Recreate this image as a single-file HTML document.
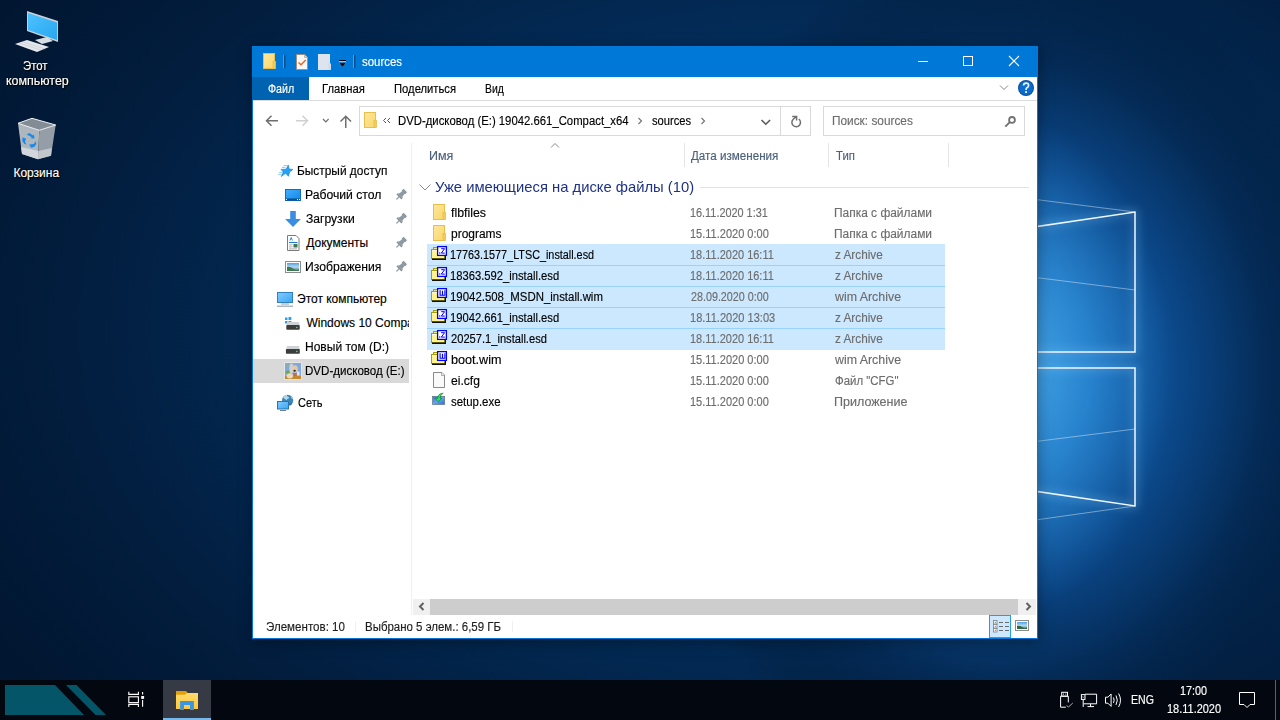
<!DOCTYPE html>
<html><head><meta charset="utf-8"><style>
*{margin:0;padding:0;box-sizing:border-box}
html,body{width:1280px;height:720px;overflow:hidden}
body{position:relative;font-family:'Liberation Sans',sans-serif;background:#021631}
.a{position:absolute}
.t{position:absolute;white-space:nowrap;line-height:20px;transform-origin:0 0;font-family:"Liberation Sans",sans-serif;-webkit-text-stroke:0.15px currentColor}
#wall{position:absolute;left:0;top:0;width:1280px;height:680px}
#win{position:absolute;left:252px;top:46px;width:786px;height:593px;background:#fff;border:1px solid #0078d7;box-shadow:1px 3px 14px rgba(0,0,0,0.35)}
#title{position:absolute;left:-1px;top:-1px;width:786px;height:31px;background:#0078d7}
#ribbon{position:absolute;left:0;top:30px;width:784px;height:24px;background:#fff;border-bottom:1px solid #dadbdc}
#filetab{position:absolute;left:0;top:0;width:56px;height:23px;background:#0063b1}
.box{position:absolute;border:1px solid #d9d9d9;background:#fff}
#taskbar{position:absolute;left:0;top:680px;width:1280px;height:40px;background:#03070f}

</style></head><body>
<svg id="wall" width="1280" height="680" viewBox="0 0 1280 680">
 <defs>
  <radialGradient id="g0" cx="0" cy="0" r="1" gradientUnits="userSpaceOnUse" gradientTransform="translate(800,330) scale(950,620)">
   <stop offset="0" stop-color="#063a72"/>
   <stop offset="0.45" stop-color="#032d5a"/>
   <stop offset="0.8" stop-color="#021c3c"/>
   <stop offset="1" stop-color="#011630"/>
  </radialGradient>
  <radialGradient id="g1" cx="0" cy="0" r="1" gradientUnits="userSpaceOnUse" gradientTransform="translate(1000,370) scale(360,420)">
   <stop offset="0" stop-color="#2c8cd8"/>
   <stop offset="0.25" stop-color="#1a6fbd"/>
   <stop offset="0.5" stop-color="#0b4788"/>
   <stop offset="0.75" stop-color="#042a55"/>
   <stop offset="1" stop-color="#021a38" stop-opacity="0"/>
  </radialGradient>
  <radialGradient id="g2" cx="0" cy="0" r="1" gradientUnits="userSpaceOnUse" gradientTransform="translate(1005,365) scale(165,250)">
   <stop offset="0" stop-color="#55b8f4" stop-opacity="0.8"/>
   <stop offset="0.5" stop-color="#3a9ce2" stop-opacity="0.45"/>
   <stop offset="1" stop-color="#2a86d4" stop-opacity="0"/>
  </radialGradient>
  <filter id="blur4" x="-20%" y="-20%" width="140%" height="140%"><feGaussianBlur stdDeviation="5"/></filter>
 </defs>
 <rect width="1280" height="680" fill="url(#g0)"/>
 <rect width="1280" height="680" fill="url(#g1)"/>
 <rect x="0" y="0" width="1280" height="680" fill="url(#g2)"/>
 <g stroke="#8fd0ff" fill="none" opacity="0.35" filter="url(#blur4)" stroke-width="5">
  <polyline points="1000,232 1135,212 1135,352 1000,352"/>
  <polyline points="1000,368 1135,368 1135,506 1000,486"/>
 </g>
 <g stroke="#eef8ff" fill="none">
  <polyline points="1000,232 1135,212 1135,352 1000,352" stroke-width="1.5"/>
  <polyline points="1000,368 1135,368 1135,506 1000,486" stroke-width="1.5"/>
  <line x1="1000" y1="195" x2="1135" y2="212" stroke-width="0.8" opacity="0.55"/>
  <line x1="1000" y1="273" x2="1135" y2="290" stroke-width="0.8" opacity="0.55"/>
  <line x1="1000" y1="446" x2="1135" y2="429" stroke-width="0.8" opacity="0.55"/>
  <line x1="1000" y1="525" x2="1135" y2="506" stroke-width="0.8" opacity="0.55"/>
 </g>
</svg>

<!-- desktop icons -->
<svg class="a" style="left:0;top:0" width="80" height="180" viewBox="0 0 80 180">
 <defs>
  <linearGradient id="scr" x1="0" y1="0" x2="1" y2="1">
   <stop offset="0" stop-color="#4cc2ff"/><stop offset="1" stop-color="#2aa6f0"/>
  </linearGradient>
  <linearGradient id="bin" x1="0" y1="0" x2="0" y2="1">
   <stop offset="0" stop-color="#a9b3bd"/><stop offset="0.8" stop-color="#c9d0d6"/><stop offset="1" stop-color="#e8ebee"/>
  </linearGradient>
 </defs>
 <!-- monitor -->
 <polygon points="27,11 58,21 58,42 27,31" fill="#c8d0d8"/>
 <polygon points="28,13 57,22.5 57,40 28,30" fill="url(#scr)"/>
 <polygon points="35,40 47,37 53,41 42,44" fill="#d7dde2"/>
 <polygon points="15,44 27,40 49,47 37,52" fill="#e4e8ec"/>
 <g stroke="#b9c0c7" stroke-width="0.5"><line x1="19" y1="43" x2="41" y2="50"/><line x1="23" y1="42" x2="45" y2="49"/></g>
 <!-- recycle bin -->
 <polygon points="18,123.3 39.3,130.3 38,159.3 22,154" fill="#aeb6be"/>
 <polygon points="39.3,130.3 55.7,125 51,155.7 38,159.3" fill="#959ea7"/>
 <polygon points="21,147 38.5,151 38,159.3 22,154" fill="#d3d7db"/>
 <polygon points="38.5,151 51.8,148 51,155.7 38,159.3" fill="#c2c7cc"/>
 <polygon points="18,123.3 32,118.3 55.7,125 39.3,130.3" fill="#838c95" stroke="#eef1f3" stroke-width="1" stroke-linejoin="round"/>
 <g fill="#1a8ae8">
  <path d="M26.5,134.5 l3,-1.5 l3.5,2.5 l1,-1 l0.5,4 l-3.8,-0.3 l1,-1 l-2.5,-1.5 z"/>
  <path d="M22.5,137.5 l3.5,1 l-1,3.5 l1.5,2.5 l-2,-0.5 l-2.2,-3 z"/>
  <path d="M29.5,144.5 l4.5,-0.5 l1.5,-3 l0.8,3 l-2,3 h-2 v1.5 l-2.5,-2.5 z"/>
 </g>
</svg>

<div id="win"></div>
<div class="a" style="left:252px;top:46px;width:786px;height:31px;background:#0078d7"></div>
<div class="a" style="left:252px;top:77px;width:57px;height:23px;background:#0063b1"></div>
<div class="a" style="left:253px;top:100px;width:784px;height:1px;background:#dadbdc"></div>

<!-- title icons -->
<svg class="a" style="left:252px;top:46px" width="786" height="31" viewBox="252 46 786 31">
 <defs>
  <linearGradient id="fold" x1="0" y1="0" x2="1" y2="1">
   <stop offset="0" stop-color="#ffe89a"/><stop offset="1" stop-color="#f9d66c"/>
  </linearGradient>
 </defs>
 <rect x="263.5" y="53.5" width="11" height="15" fill="url(#fold)" stroke="#e9be4c"/>
 <rect x="273" y="61.5" width="2.5" height="7" fill="#f5cc58" stroke="#e9be4c" stroke-width="0.8"/>
 <rect x="284" y="55" width="1.5" height="13" fill="#0b4f8f"/>
 <rect x="283.2" y="55" width="0.8" height="13" fill="#5aa7e8"/>
 <path d="M296.5,54.5 h8 l3,3 v12 h-11 z" fill="#f7f7f7" stroke="#a0907e"/>
 <path d="M304.5,54.5 v3 h3" fill="#d8d8d8" stroke="#b0a49a" stroke-width="0.8"/>
 <path d="M298.5,62.5 l2.5,2.3 l4.8,-4.8" stroke="#f0601c" stroke-width="1.3" fill="none"/>
 <rect x="318" y="54" width="12" height="16" fill="#dde4ef"/>
 <rect x="328.5" y="63.5" width="2.5" height="6.5" fill="#d2dae8"/>
 <rect x="339" y="60" width="7" height="1.1" fill="#000"/>
 <rect x="339" y="61.1" width="7" height="1.1" fill="#9fd0ff"/>
 <path d="M338.8,62.8 h7.4 l-3.7,4.2 z" fill="#000" stroke="#6ab4f5" stroke-width="0.4"/>
 <rect x="354" y="55" width="1.5" height="13" fill="#0b4f8f"/>
 <rect x="353.2" y="55" width="0.8" height="13" fill="#5aa7e8"/>
 <!-- window controls -->
 <rect x="918" y="61" width="10" height="1" fill="#fff"/>
 <rect x="963.5" y="56.5" width="9" height="9" fill="none" stroke="#fff"/>
 <path d="M1009,56 L1019,66 M1019,56 L1009,66" stroke="#fff" stroke-width="1.1"/>
</svg>

<!-- ribbon right -->
<svg class="a" style="left:990px;top:77px" width="47" height="23" viewBox="990 77 47 23">
 <path d="M1000,85.5 l4,4 l4,-4" stroke="#888" fill="none" stroke-width="1"/>
 <circle cx="1026" cy="88" r="8" fill="#0a4f98"/>
 <circle cx="1026" cy="88" r="7" fill="#0b6ccd"/>
 <path d="M1023.6,85.6 q0,-2.4 2.5,-2.4 q2.5,0 2.5,2.3 q0,1.4 -1.4,2.1 q-1.1,0.6 -1.1,1.9 v0.6" stroke="#e8f2fb" stroke-width="1.7" fill="none"/>
 <rect x="1025.1" y="91.1" width="1.9" height="1.9" fill="#e8f2fb"/>
</svg>

<!-- address toolbar -->
<svg class="a" style="left:253px;top:101px" width="784" height="42" viewBox="253 101 784 42">
 <g stroke="#6e6e6e" stroke-width="1.5" fill="none">
  <path d="M266.5,120.75 h11.5 M271.5,115.75 l-5,5 l5,5"/>
 </g>
 <g stroke="#d0d0d0" stroke-width="1.5" fill="none">
  <path d="M296,120.75 h11.5 M302.5,115.75 l5,5 l-5,5"/>
 </g>
 <path d="M323,119 l2.8,2.8 l2.8,-2.8" stroke="#6e6e6e" stroke-width="1.2" fill="none"/>
 <g stroke="#6e6e6e" stroke-width="1.5" fill="none">
  <path d="M345.75,116.5 v11.5 M340.5,121.5 l5.25,-5.25 l5.25,5.25"/>
 </g>
 <rect x="359.5" y="106.5" width="451" height="29" fill="#fff" stroke="#d9d9d9"/>
 <line x1="780.5" y1="107" x2="780.5" y2="135" stroke="#d9d9d9"/>
 <rect x="364.5" y="112.5" width="11" height="15" fill="url(#fold)" stroke="#e9be4c"/>
 <rect x="374" y="120.5" width="2.5" height="7" fill="#f5cc58" stroke="#e9be4c" stroke-width="0.8"/>
 <path d="M386,118 l-2.5,2.5 l2.5,2.5 M390,118 l-2.5,2.5 l2.5,2.5" stroke="#555" fill="none" stroke-width="1"/>
 <path d="M638.5,118 l3,3 l-3,3" stroke="#777" fill="none" stroke-width="1.2"/>
 <path d="M701.5,118 l3,3 l-3,3" stroke="#777" fill="none" stroke-width="1.2"/>
 <path d="M761.5,120 l4.3,4.3 l4.3,-4.3" stroke="#555" fill="none" stroke-width="1.5"/>
 <path d="M798.8,119 A4.3,4.3 0 1 1 793.2,119.3 L796.3,116.6" stroke="#707070" fill="none" stroke-width="1.5"/><path d="M792.2,116.5 H796.6 V120.6" stroke="#707070" fill="none" stroke-width="1.5"/>
 
 <rect x="823.5" y="106.5" width="201" height="29" fill="#fff" stroke="#d9d9d9"/>
 <circle cx="1012" cy="119.9" r="2.9" stroke="#727272" stroke-width="1.8" fill="none"/>
 <path d="M1009.8,122.1 L1005.3,126.6" stroke="#727272" stroke-width="1.9"/>
</svg>

<!-- nav pane -->
<div class="a" style="left:411px;top:143px;width:1px;height:472px;background:#f0f0f0"></div>
<div class="a" style="left:253px;top:359px;width:156px;height:24px;background:#d9d9d9"></div>
<svg class="a" style="left:253px;top:143px" width="158" height="280" viewBox="253 143 158 280">
 <defs>
  <linearGradient id="bl" x1="0" y1="0" x2="1" y2="1"><stop offset="0" stop-color="#3fb0ff"/><stop offset="1" stop-color="#1486e8"/></linearGradient>
 </defs>
 <!-- star -->
 <path d="M288.4,165.1 L289,169 L292.9,169.4 L289.6,172 L288.5,176.3 L285.5,173.3 L281.3,176.5 L283.3,172 L281,169.4 L286,169.2 Z" fill="#27a0f5" stroke="#0b7ed6" stroke-width="0.6" stroke-linejoin="round"/>
 <g stroke="#55b4f5" stroke-width="0.9" stroke-linecap="round" opacity="0.8"><line x1="284" y1="165.6" x2="287.5" y2="165.6"/><line x1="282.3" y1="167.4" x2="285" y2="167.4"/><line x1="279.6" y1="172.3" x2="282" y2="172.3"/><line x1="278.6" y1="174.3" x2="281" y2="174.3"/></g>
 <!-- desktop -->
 <rect x="285.5" y="189.5" width="15" height="11" fill="url(#bl)" stroke="#0d6ec4"/>
 <rect x="286" y="198.5" width="14" height="2" fill="#0b4c8c"/>
 <g fill="#fff"><rect x="286" y="199" width="1" height="1"/><rect x="297" y="199" width="1" height="1"/><rect x="299" y="199" width="1" height="1"/></g>
 <!-- download -->
 <path d="M290.2,211 h5.6 v8 h5.1 l-7.9,8 l-7.9,-8 h5.1 z" fill="#3a8de0"/>
 <!-- documents -->
 <path d="M287.5,235.5 h8.5 l3,3 v12 h-11.5 z" fill="#fff" stroke="#7a7a7a"/>
 <path d="M290,240.5 l1.2,-3 l1.2,3" stroke="#1d7bd8" fill="none" stroke-width="0.9"/>
 <rect x="289" y="242" width="8.5" height="1" fill="#1d7bd8"/>
 <rect x="289" y="244.5" width="3.5" height="0.8" fill="#999"/><rect x="289" y="246.5" width="3.5" height="0.8" fill="#999"/><rect x="289" y="248.5" width="8" height="0.8" fill="#999"/>
 <rect x="293.5" y="244" width="4" height="3.5" fill="#3b7a55"/>
 <!-- pictures -->
 <rect x="285.5" y="261.5" width="15" height="11" fill="#fff" stroke="#8c8c8c"/>
 <defs><linearGradient id="sky" x1="0" y1="0" x2="0" y2="1"><stop offset="0" stop-color="#4aa3e8"/><stop offset="0.5" stop-color="#b8d8ee"/><stop offset="1" stop-color="#3f6f86"/></linearGradient></defs>
 <rect x="287" y="263" width="12" height="8" fill="url(#sky)"/>
 <path d="M287,267 q3,-1 6,1.5 t6,1 v1.5 h-12 z" fill="#3d7a4e"/>
 <!-- pins -->
<g transform="translate(399.6,196.2) rotate(45)" fill="#8c979f"><rect x="-2.5" y="-8" width="5" height="3"/><path d="M-1.6,-5.2 h3.2 l0.9,4.2 h-5 z"/><rect x="-3.5" y="-1.2" width="7" height="2.2"/><rect x="-0.6" y="0.5" width="1.2" height="4"/></g>
<g transform="translate(399.6,220.2) rotate(45)" fill="#8c979f"><rect x="-2.5" y="-8" width="5" height="3"/><path d="M-1.6,-5.2 h3.2 l0.9,4.2 h-5 z"/><rect x="-3.5" y="-1.2" width="7" height="2.2"/><rect x="-0.6" y="0.5" width="1.2" height="4"/></g>
<g transform="translate(399.6,244.2) rotate(45)" fill="#8c979f"><rect x="-2.5" y="-8" width="5" height="3"/><path d="M-1.6,-5.2 h3.2 l0.9,4.2 h-5 z"/><rect x="-3.5" y="-1.2" width="7" height="2.2"/><rect x="-0.6" y="0.5" width="1.2" height="4"/></g>
<g transform="translate(399.6,268.2) rotate(45)" fill="#8c979f"><rect x="-2.5" y="-8" width="5" height="3"/><path d="M-1.6,-5.2 h3.2 l0.9,4.2 h-5 z"/><rect x="-3.5" y="-1.2" width="7" height="2.2"/><rect x="-0.6" y="0.5" width="1.2" height="4"/></g>
 <!-- this pc -->
 <rect x="277.5" y="292.5" width="15" height="10" fill="url(#pcs)" stroke="#2f7fc1"/>
 <rect x="281" y="303.5" width="8" height="1" fill="#8aa0b4"/>
 <rect x="277" y="305.5" width="16" height="1.5" fill="#a9b6c2"/>
 <!-- win drive -->
 <g fill="#1ea4f0"><rect x="285" y="317.5" width="2.5" height="2.5"/><rect x="288.5" y="317" width="2.8" height="3"/><rect x="285" y="321" width="2.5" height="2.5"/><rect x="288.5" y="321" width="2.8" height="3"/></g>
 <path d="M287,322 h12 l0.7,3 h-13.4 z" fill="#cfd3d6"/>
 <rect x="286.3" y="325" width="13.4" height="4.7" rx="0.8" fill="#3c3c3c"/>
 <rect x="296" y="326.8" width="1.6" height="1.3" fill="#3ce04a"/>
 <!-- drive D -->
 <path d="M287,346 h12 l0.7,3 h-13.4 z" fill="#cfd3d6"/>
 <rect x="285.9" y="349" width="13.9" height="4.8" rx="0.8" fill="#3c3c3c"/>
 <rect x="296" y="350.8" width="1.6" height="1.3" fill="#3ce04a"/>
 <!-- dvd -->
 <rect x="284.3" y="362.3" width="17.4" height="17.4" fill="#ececec"/>
 <rect x="285" y="363" width="16" height="16" fill="#7ea9e0"/>
 <rect x="285" y="363" width="6" height="4" fill="#8fb0a8" opacity="0.7"/>
 <ellipse cx="288.5" cy="372" rx="3" ry="1.6" fill="#6aa84a"/>
 <ellipse cx="291.5" cy="368.5" rx="2.2" ry="5" fill="#cfd0d4"/>
 <rect x="285" y="376" width="16" height="3" fill="#c8872c"/>
 <ellipse cx="289.8" cy="375.8" rx="3.2" ry="2.6" fill="#eadcb8"/>
 <ellipse cx="295.2" cy="369" rx="2.6" ry="3.8" fill="#e6c9a2"/>
 <ellipse cx="294.6" cy="370.8" rx="1.2" ry="1" fill="#3a1818"/>
 <rect x="293.3" y="373" width="3.4" height="3" fill="#c46a52"/>
 <rect x="297" y="371.5" width="2.5" height="4" fill="#dfe8f0"/>
 <!-- network -->
 <circle cx="287.6" cy="400.3" r="5.6" fill="#3d86b8"/>
 <path d="M283,397.5 q1.5,-2.5 4,-2.8 q-0.5,1.5 1,2 q1.5,0 1,1.5 q-2,0.5 -2.5,2 q-2,-1.5 -3.5,-2.7 z" fill="#b4d8ea"/>
 <path d="M290.5,396 q2,1 2.5,3 q-1,0.3 -1.5,-0.5 z" fill="#a8d0e4"/>
 <path d="M289,404 q2.5,-0.5 3.8,-2.5 q-0.3,2.5 -2.5,4 z" fill="#2a6a98"/>
 <rect x="277.5" y="401.5" width="11" height="7.5" fill="url(#pcs)" stroke="#2b73b0"/>
 <rect x="280" y="410" width="6" height="1" fill="#6e7f90"/>
 <defs><linearGradient id="pcs" x1="0" y1="0" x2="1" y2="1"><stop offset="0" stop-color="#86ccff"/><stop offset="1" stop-color="#36a6f2"/></linearGradient></defs>
</svg>

<!-- column headers -->
<svg class="a" style="left:412px;top:136px" width="625" height="470" viewBox="412 136 625 470">
 <path d="M551,147.5 l4,-4 l4,4" stroke="#888" stroke-width="1" fill="none"/>
 <g fill="#e5e5e5"><rect x="684" y="143" width="1" height="24"/><rect x="828" y="143" width="1" height="24"/><rect x="948" y="143" width="1" height="24"/></g>
 <path d="M419.5,184.5 l5.5,5.5 l5.5,-5.5" stroke="#8a8a8a" stroke-width="1" fill="none"/>
 <rect x="700" y="187" width="329" height="1" fill="#e2e2e2"/>
 <!-- selection -->
 <rect x="427" y="244" width="518" height="106" fill="#cce8ff"/>
 <g fill="#99d1ff"><rect x="427" y="265" width="518" height="1"/><rect x="427" y="286" width="518" height="1"/><rect x="427" y="307" width="518" height="1"/><rect x="427" y="328" width="518" height="1"/></g>
</svg>

<!-- file icons -->
<svg class="a" style="left:425px;top:200px" width="30" height="215" viewBox="425 200 30 215">
 <defs>
  <g id="fld">
   <rect x="433.5" y="0.5" width="11" height="15" fill="url(#fold)" stroke="#e9be4c"/>
   <rect x="443" y="8.5" width="2.5" height="7" fill="#f5cc58" stroke="#e9be4c" stroke-width="0.8"/>
  </g>
  <g id="arc">
   <rect x="433.5" y="3.5" width="4" height="2" fill="#f3ea9a" stroke="#a89c00"/>
   <rect x="431.5" y="5.5" width="13" height="9" fill="#fff38e" stroke="#a89c00"/>
   <rect x="432" y="6" width="12" height="1.2" fill="#fffbe0"/>
   <rect x="432" y="14.5" width="14" height="1.5" fill="#111"/>
   <rect x="444.8" y="11" width="1.2" height="5" fill="#111"/>
   <rect x="437.6" y="2.6" width="8.8" height="8.8" fill="#fff" stroke="#0000ff" stroke-width="1.3"/>
  </g>
  <g id="zz"><path d="M441.2,4.7 h3.4 l-3.3,4.4 h3.5" stroke="#0000ff" stroke-width="1" fill="none"/><rect x="439.1" y="8.4" width="1.2" height="1.2" fill="#0000ff"/></g>
  <g id="ww"><path d="M440.1,4.2 v5 h4.8 v-5 M442.5,4.8 v4.4" stroke="#0000ff" stroke-width="1.15" fill="none"/></g>
 </defs>
 <use href="#fld" y="204"/>
 <use href="#fld" y="225"/>
 <g transform="translate(0,244)"><use href="#arc"/><use href="#zz"/></g>
 <g transform="translate(0,265)"><use href="#arc"/><use href="#zz"/></g>
 <g transform="translate(0,286)"><use href="#arc"/><use href="#ww"/></g>
 <g transform="translate(0,307)"><use href="#arc"/><use href="#zz"/></g>
 <g transform="translate(0,328)"><use href="#arc"/><use href="#zz"/></g>
 <g transform="translate(0,349)"><use href="#arc"/><use href="#ww"/></g>
 <path d="M433.5,372.5 h8.5 l2.5,2.5 v12.5 h-11 z" fill="#fafafa" stroke="#8a8a8a"/>
 <path d="M441.5,372.5 v3 h3" fill="#eee" stroke="#9a9a9a" stroke-width="0.8"/>
 <defs><linearGradient id="setg" x1="0" y1="0" x2="1" y2="1"><stop offset="0" stop-color="#3a78d6"/><stop offset="0.5" stop-color="#62a4ee"/><stop offset="1" stop-color="#2f6cc8"/></linearGradient></defs>
 <rect x="432.5" y="396.3" width="12.2" height="8.2" fill="url(#setg)" stroke="#5d6b7d" stroke-width="0.6"/>
 <path d="M443.2,393.2 Q438.4,393.4 438,397 V398.2 H435 L438.4,401.8 L441.8,398.2 H440.2 V397.2 Q440.5,394.8 443.2,393.2 Z" fill="#2ae85c" stroke="#10602a" stroke-width="0.55" stroke-linejoin="round"/>
</svg>

<!-- scrollbar -->
<div class="a" style="left:413px;top:599px;width:623px;height:16px;background:#f0f0f0"></div>
<div class="a" style="left:430px;top:599px;width:588px;height:16px;background:#cdcdcd"></div>
<svg class="a" style="left:413px;top:599px" width="623" height="16" viewBox="413 599 623 16">
 <path d="M423.5,603 l-3.5,3.5 l3.5,3.5" stroke="#606060" stroke-width="2" fill="none"/>
 <path d="M1026.5,603 l3.5,3.5 l-3.5,3.5" stroke="#606060" stroke-width="2" fill="none"/>
</svg>

<!-- status bar -->
<div class="a" style="left:355px;top:621px;width:1px;height:11px;background:#f0f0f0"></div>
<div class="a" style="left:512px;top:621px;width:1px;height:11px;background:#f0f0f0"></div>
<svg class="a" style="left:989px;top:615px" width="48" height="23" viewBox="989 615 48 23">
 <rect x="989.5" y="615.5" width="21" height="22" fill="#cce8ff" stroke="#26a0da"/>
 <g fill="#fff" stroke="#8a8a8a" stroke-width="0.9"><rect x="993.5" y="620.5" width="3.5" height="3.5"/><rect x="993.5" y="624.5" width="3.5" height="3.5"/><rect x="993.5" y="628.5" width="3.5" height="3.5"/></g>
 <rect x="994.8" y="621.8" width="1" height="1" fill="#3a7a3a"/><rect x="994.8" y="625.8" width="1" height="1" fill="#3a7aff"/><rect x="994.8" y="629.8" width="1" height="1" fill="#e02020"/>
 <g fill="#6a6a6a"><rect x="999" y="622" width="4" height="1"/><rect x="1005" y="622" width="4" height="1"/><rect x="999" y="626" width="4" height="1"/><rect x="1005" y="626" width="4" height="1"/><rect x="999" y="630" width="4" height="1"/><rect x="1005" y="630" width="4" height="1"/></g>
 <rect x="1015.5" y="620.5" width="13" height="10" fill="#fff" stroke="#8c8c8c"/>
 <rect x="1017" y="622" width="10" height="7" fill="url(#sky)"/>
 <path d="M1017,626 q2.5,-1 5,1 t5,0.5 v1.5 h-10 z" fill="#2f6a3e"/>
</svg>

<!-- taskbar -->
<div id="taskbar"></div>
<svg class="a" style="left:0;top:680px" width="1280" height="40" viewBox="0 680 1280 40">
 <polygon points="5,685 55,685 84,715 5,715" fill="#045568"/>
 <polygon points="66,685 76.5,685 106,715 95.5,715" fill="#045568"/>
 <g stroke="#fff" stroke-width="1.1" fill="none">
  <path d="M128.8,691.8 v2.6 h9.6 v-2.6"/>
  <rect x="128.8" y="696.8" width="9.6" height="5.8"/>
  <path d="M128.8,707 v-2.6 h9.6 v2.6"/>
  <path d="M142.6,692 v2.5 M142.6,700 v6.8"/>
 </g>
 <rect x="141.2" y="696" width="2.9" height="2.9" fill="#fff"/>
 <rect x="163" y="680" width="48" height="40" fill="#353a44"/>
 <rect x="163" y="718" width="48" height="2" fill="#76b9ed"/>
 <path d="M176,691.1 h10 l1.8,1.8 h10.2 v16 h-22 z" fill="#e3a008"/>
 <defs><linearGradient id="tbf" x1="0" y1="0" x2="0" y2="1"><stop offset="0" stop-color="#ffdb6e"/><stop offset="1" stop-color="#ffc83a"/></linearGradient></defs>
 <path d="M176,694.8 h9 l1.8,-1.9 h11.2 v16 h-22 z" fill="url(#tbf)"/>
 <path d="M180.1,710 v-8.9 h13.8 v8.9 h-3.9 v-5 h-6 v5 z" fill="#3a96e0"/>
 <!-- tray -->
 <g stroke="#fff" stroke-width="1" fill="none">
  <rect x="1061.7" y="692.3" width="5.8" height="3.9"/>
  <path d="M1060.6,696.2 v11 h5.2 M1068.3,696.2 v6.2 M1060.6,696.2 h7.7"/>
  <path d="M1066.5,705.6 l2,1.4 l4.3,-4" stroke="#aaa"/>
  <rect x="1081.4" y="694.6" width="3.6" height="4.8"/>
  <path d="M1085,694.2 h11.6 v9.6 h-13 M1083.2,699.4 v7.6 M1090.5,703.8 v2.6 M1087.5,706.6 h6.5"/>
  <path d="M1105.5,697.2 h2.4 l3.2,-3.2 v12.4 l-3.2,-3.2 h-2.4 z"/>
  <path d="M1113.5,697.5 q1.3,2.7 0,5.4 M1116,695.5 q2.6,4.7 0,9.4 M1118.6,693.5 q3.8,6.7 0,13.4"/>
  <path d="M1239.5,692.5 h15 v12 h-4.5 l-3,3 l-3,-3 h-4.5 z"/>
 </g>
 <g fill="#fff"><rect x="1063" y="693.6" width="1" height="1"/><rect x="1065.3" y="693.6" width="1" height="1"/></g>
 <path d="M1082.2,696.5 l1,1 l1,-1" stroke="#fff" stroke-width="0.8" fill="none"/>
 <rect x="1275" y="680" width="1" height="40" fill="#5c6068"/>
</svg>

<div class="t" style="left:23.35px;top:56.00px;font-size:12px;color:#fff;transform:scaleX(0.9480);text-shadow:0 0 2px #000,1px 1px 1px #000;">Этот</div>
<div class="t" style="left:5.80px;top:71.00px;font-size:12px;color:#fff;transform:scaleX(1.0367);text-shadow:0 0 2px #000,1px 1px 1px #000;">компьютер</div>
<div class="t" style="left:13.40px;top:163.00px;font-size:12px;color:#fff;transform:scaleX(1.0000);text-shadow:0 0 2px #000,1px 1px 1px #000;">Корзина</div>
<div class="t" style="left:362.00px;top:52.00px;font-size:12px;color:#fff;transform:scaleX(0.9524);">sources</div>
<div class="t" style="left:267.70px;top:79.00px;font-size:12px;color:#fff;transform:scaleX(0.8897);">Файл</div>
<div class="t" style="left:322.46px;top:79.00px;font-size:12px;color:#000;transform:scaleX(0.9364);">Главная</div>
<div class="t" style="left:393.56px;top:79.00px;font-size:12px;color:#000;transform:scaleX(0.9369);">Поделиться</div>
<div class="t" style="left:484.63px;top:79.00px;font-size:12px;color:#000;transform:scaleX(0.8667);">Вид</div>
<div class="t" style="left:398.46px;top:111.00px;font-size:12px;color:#000;transform:scaleX(0.9444);">DVD-дисковод (E:) 19042.661_Compact_x64</div>
<div class="t" style="left:652.20px;top:111.00px;font-size:12px;color:#000;transform:scaleX(0.9310);">sources</div>
<div class="t" style="left:831.61px;top:111.00px;font-size:12px;color:#6d6d6d;transform:scaleX(0.9864);">Поиск: sources</div>
<div class="t" style="left:297.31px;top:161.00px;font-size:12px;color:#000;transform:scaleX(0.9911);">Быстрый доступ</div>
<div class="t" style="left:305.29px;top:185.00px;font-size:12px;color:#000;transform:scaleX(1.0135);">Рабочий стол</div>
<div class="t" style="left:306.30px;top:209.00px;font-size:12px;color:#000;transform:scaleX(1.0083);">Загрузки</div>
<div class="t" style="left:306.30px;top:233.00px;font-size:12px;color:#000;transform:scaleX(1.0000);">Документы</div>
<div class="t" style="left:305.29px;top:257.00px;font-size:12px;color:#000;transform:scaleX(1.0135);">Изображения</div>
<div class="t" style="left:297.00px;top:289.00px;font-size:12px;color:#000;transform:scaleX(1.0000);">Этот компьютер</div>
<div class="t" style="left:306.40px;top:313.00px;font-size:12px;color:#000;width:102.6px;overflow:hidden;">Windows 10 Compact</div>
<div class="t" style="left:305.40px;top:337.00px;font-size:12px;color:#000;transform:scaleX(1.0012);">Новый том (D:)</div>
<div class="t" style="left:305.44px;top:361.00px;font-size:12px;color:#000;transform:scaleX(0.9627);">DVD-дисковод (E:)</div>
<div class="t" style="left:298.30px;top:393.00px;font-size:12px;color:#000;transform:scaleX(0.9148);">Сеть</div>
<div class="t" style="left:429.46px;top:146.00px;font-size:12px;color:#4c607a;transform:scaleX(1.0409);">Имя</div>
<div class="t" style="left:691.20px;top:146.00px;font-size:12px;color:#4c607a;transform:scaleX(0.9689);">Дата изменения</div>
<div class="t" style="left:835.50px;top:146.00px;font-size:12px;color:#4c607a;transform:scaleX(0.9450);">Тип</div>
<div class="t" style="left:434.70px;top:177.00px;font-size:15px;color:#1e3287;transform:scaleX(0.9859);-webkit-text-stroke:0;">Уже имеющиеся на диске файлы (10)</div>
<div class="t" style="left:451.25px;top:203.00px;font-size:12px;color:#000;transform:scaleX(1.0294);">flbfiles</div>
<div class="t" style="left:690.29px;top:203.00px;font-size:12px;color:#6d6d6d;transform:scaleX(0.9059);">16.11.2020 1:31</div>
<div class="t" style="left:834.21px;top:203.00px;font-size:12px;color:#6d6d6d;transform:scaleX(0.9948);">Папка с файлами</div>
<div class="t" style="left:451.25px;top:224.00px;font-size:12px;color:#000;transform:scaleX(0.9980);">programs</div>
<div class="t" style="left:690.28px;top:224.00px;font-size:12px;color:#6d6d6d;transform:scaleX(0.9176);">15.11.2020 0:00</div>
<div class="t" style="left:834.21px;top:224.00px;font-size:12px;color:#6d6d6d;transform:scaleX(0.9948);">Папка с файлами</div>
<div class="t" style="left:450.35px;top:245.00px;font-size:12px;color:#000;transform:scaleX(0.9009);">17763.1577_LTSC_install.esd</div>
<div class="t" style="left:690.29px;top:245.00px;font-size:12px;color:#6d6d6d;transform:scaleX(0.9143);">18.11.2020 16:11</div>
<div class="t" style="left:835.20px;top:245.00px;font-size:12px;color:#6d6d6d;transform:scaleX(0.9796);">z Archive</div>
<div class="t" style="left:450.32px;top:266.00px;font-size:12px;color:#000;transform:scaleX(0.9348);">18363.592_install.esd</div>
<div class="t" style="left:690.29px;top:266.00px;font-size:12px;color:#6d6d6d;transform:scaleX(0.9143);">18.11.2020 16:11</div>
<div class="t" style="left:835.20px;top:266.00px;font-size:12px;color:#6d6d6d;transform:scaleX(0.9796);">z Archive</div>
<div class="t" style="left:450.30px;top:287.00px;font-size:12px;color:#000;transform:scaleX(0.9513);">19042.508_MSDN_install.wim</div>
<div class="t" style="left:691.20px;top:287.00px;font-size:12px;color:#6d6d6d;transform:scaleX(0.8954);">28.09.2020 0:00</div>
<div class="t" style="left:835.20px;top:287.00px;font-size:12px;color:#6d6d6d;transform:scaleX(1.0312);">wim Archive</div>
<div class="t" style="left:450.32px;top:308.00px;font-size:12px;color:#000;transform:scaleX(0.9348);">19042.661_install.esd</div>
<div class="t" style="left:690.28px;top:308.00px;font-size:12px;color:#6d6d6d;transform:scaleX(0.9209);">18.11.2020 13:03</div>
<div class="t" style="left:835.20px;top:308.00px;font-size:12px;color:#6d6d6d;transform:scaleX(0.9796);">z Archive</div>
<div class="t" style="left:451.25px;top:329.00px;font-size:12px;color:#000;transform:scaleX(0.9272);">20257.1_install.esd</div>
<div class="t" style="left:690.29px;top:329.00px;font-size:12px;color:#6d6d6d;transform:scaleX(0.9143);">18.11.2020 16:11</div>
<div class="t" style="left:835.20px;top:329.00px;font-size:12px;color:#6d6d6d;transform:scaleX(0.9796);">z Archive</div>
<div class="t" style="left:451.25px;top:350.00px;font-size:12px;color:#000;transform:scaleX(1.0521);">boot.wim</div>
<div class="t" style="left:690.28px;top:350.00px;font-size:12px;color:#6d6d6d;transform:scaleX(0.9176);">15.11.2020 0:00</div>
<div class="t" style="left:835.20px;top:350.00px;font-size:12px;color:#6d6d6d;transform:scaleX(1.0312);">wim Archive</div>
<div class="t" style="left:451.25px;top:371.00px;font-size:12px;color:#000;transform:scaleX(1.0089);">ei.cfg</div>
<div class="t" style="left:690.28px;top:371.00px;font-size:12px;color:#6d6d6d;transform:scaleX(0.9176);">15.11.2020 0:00</div>
<div class="t" style="left:835.20px;top:371.00px;font-size:12px;color:#6d6d6d;transform:scaleX(0.9522);">Файл "CFG"</div>
<div class="t" style="left:451.25px;top:392.00px;font-size:12px;color:#000;transform:scaleX(0.9519);">setup.exe</div>
<div class="t" style="left:690.28px;top:392.00px;font-size:12px;color:#6d6d6d;transform:scaleX(0.9176);">15.11.2020 0:00</div>
<div class="t" style="left:834.16px;top:392.00px;font-size:12px;color:#6d6d6d;transform:scaleX(1.0435);">Приложение</div>
<div class="t" style="left:266.24px;top:617.00px;font-size:12px;color:#1e1e1e;transform:scaleX(0.9642);">Элементов: 10</div>
<div class="t" style="left:365.29px;top:617.00px;font-size:12px;color:#1e1e1e;transform:scaleX(0.9557);">Выбрано 5 элем.: 6,59 ГБ</div>
<div class="t" style="left:1130.92px;top:690.00px;font-size:12px;color:#fff;transform:scaleX(0.8840);">ENG</div>
<div class="t" style="left:1179.90px;top:681.00px;font-size:12px;color:#fff;transform:scaleX(0.9000);">17:00</div>
<div class="t" style="left:1166.79px;top:699.00px;font-size:12px;color:#fff;transform:scaleX(0.9138);">18.11.2020</div>
</body></html>
